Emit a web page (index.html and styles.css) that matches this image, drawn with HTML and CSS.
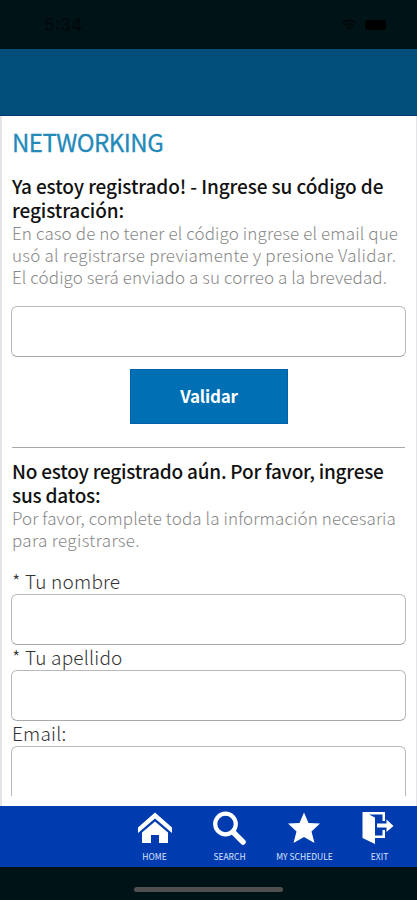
FILE: index.html
```html
<!DOCTYPE html>
<html lang="es">
<head>
<meta charset="utf-8">
<title>Networking</title>
<link rel="stylesheet" href="styles.css">
</head>
<body>
<div class="status">
  <span class="time">5:34</span>
  <svg class="wifi" width="16" height="12" viewBox="0 0 16 12"><g fill="none" stroke="#00080a" stroke-width="1.9"><path d="M1 4.2Q8-1.8 15 4.2M3.500 7Q8 3 12.500 7"/></g><path d="M5.500 8.800Q8 6.800 10.500 8.800L8 11.500Z" fill="#00080a"/></svg>
  <span class="battery"></span>
</div>
<header class="header"></header>
<main class="content">
  <h1 class="title">NETWORKING</h1>
  <h2 class="heading"><span class="h-a">Ya estoy registrado! - Ingrese su código de</span><br><span class="h-b">registración:</span></h2>
  <p class="note"><span class="n-a">En caso de no tener el código ingrese el email que</span><br><span class="n-b">usó al registrarse previamente y presione Validar.</span><br><span class="n-c">El código será enviado a su correo a la brevedad.</span></p>
  <div class="field code"></div>
  <button class="validate">Validar</button>
  <hr class="rule">
  <h2 class="heading"><span class="h-c">No estoy registrado aún. Por favor, ingrese</span><br><span class="h-d">sus datos:</span></h2>
  <p class="note"><span class="n-d">Por favor, complete toda la información necesaria</span><br><span class="n-e">para registrarse.</span></p>
  <div class="form">
    <label class="label">* Tu nombre</label>
    <div class="field"></div>
    <label class="label">* Tu apellido</label>
    <div class="field"></div>
    <label class="label">Email:</label>
    <div class="field cut"></div>
  </div>
</main>
<nav class="nav">
  <a class="item"><svg width="34" height="32" viewBox="0 0 34 32"><path d="M0 16.500 17 1.500 34 16.500V22L17 7.500 0 22Z"/><path d="M4 21.500 17 10.500 30 21.500V32H21V24H13V32H4Z"/></svg><span>HOME</span></a>
  <a class="item"><svg width="34" height="32" viewBox="0 0 34 32"><circle cx="12.500" cy="13" r="10.300" fill="none" stroke="#fff" stroke-width="4.200"/><path d="M20 21 30 31" stroke="#fff" stroke-width="5.500" stroke-linecap="round"/></svg><span>SEARCH</span></a>
  <a class="item"><svg width="34" height="32" viewBox="0 0 34 32"><path d="M16 1.500 20.500 12 32 12.500 23.500 20.500 26.500 32 16 26 5.500 32 8.500 20.500 0 12.500 11.500 12Z"/></svg><span>MY SCHEDULE</span></a>
  <a class="item"><svg width="34" height="32" viewBox="0 0 34 32"><path d="M-.5 1H22V10H19.500V3.500H6L12 6.500V24.500H19.500V19H22V27H12V33L-.5 27Z"/><path d="M14 12.500H23.500V8.500L30.500 15 23.500 21V16.500H14Z"/></svg><span>EXIT</span></a>
</nav>
<footer class="bottom"><span class="handle"></span></footer>
</body>
</html>
```
FILE: styles.css
```css
* { box-sizing: border-box; }
body {
  margin: 0;
  width: 417px;
  height: 900px;
  overflow: hidden;
  display: flex;
  flex-direction: column;
  background: #fff;
  font-family: "Noto Sans CJK SC", "Noto Sans", sans-serif;
}
h1, h2, p { margin: 0; white-space: nowrap; }
.status {
  height: 49px;
  flex: none;
  display: flex;
  align-items: center;
  background: #001418;
  padding: 0 31px 0 44px;
}
.time { flex: 1; font: 600 17px/20px Inter, sans-serif; color: #00090b; }
.wifi { margin-right: 8px; }
.battery { width: 21px; height: 10px; border-radius: 3px; background: #000; }
.header { height: 67px; flex: none; background: #004e79; border-bottom: 1px solid #003b70; }
.content {
  height: 690px;
  flex: none;
  padding: 11px 10px 0 9px;
  border: solid #e4e4e8;
  border-width: 0 1px 0 2px;
  overflow: hidden;
}
.title { padding-left: 1px; font-weight: 400; font-size: 24px; line-height: 30px; letter-spacing: -.5px; color: #2389b9; -webkit-text-stroke: .3px; }
.heading { padding-left: 1px; font-size: 19px; line-height: 24px; font-weight: 500; color: #111; }
.title + .heading { margin-top: 17px; }
.h-a { letter-spacing: -.1px; }
.h-b { letter-spacing: -.1px; }
.h-c { letter-spacing: -.23px; }
.h-d { letter-spacing: -.2px; }
.note { padding-left: 1px; font-size: 17px; line-height: 22px; font-weight: 300; color: #888; }
.n-a { letter-spacing: .13px; }
.n-b { letter-spacing: .24px; }
.n-c { letter-spacing: .1px; }
.n-d { letter-spacing: .11px; }
.n-e { letter-spacing: .35px; }
.field { height: 51px; border: 1px solid #b9b9b9; border-bottom-color: #aaa; border-radius: 6px; background: #fff; }
.code { margin-top: 18px; }
.validate {
  display: block;
  width: 158px;
  height: 55px;
  margin: 12px auto 0 119px;
  padding: 0;
  border: 1px solid #0061a8;
  background: #006fb3;
  color: #fff;
  font: 700 17px/49px "Noto Sans CJK SC", sans-serif;
  letter-spacing: -.2px;
}
.validate { padding-bottom: 3px; }
.rule { height: 1px; margin: 23px 1px 11px; border: 0; background: #aaa; }
.form { margin-top: 18px; }
.label { display: block; height: 25px; padding-left: 1px; font-size: 19px; line-height: 24px; font-weight: 300; letter-spacing: .2px; color: #333; }
.cut { height: 50px; border-bottom: 0; border-radius: 6px 6px 0 0; }
.nav {
  height: 61px;
  flex: none;
  display: grid;
  grid-template-columns: repeat(4, 75px);
  padding-left: 117px;
  background: #003baf;
}
.item { display: flex; flex-direction: column; align-items: center; padding-top: 5px; }
.item svg { fill: #fff; overflow: visible; }
.item span { margin-top: 8px; font-size: 8.500px; line-height: 11px; color: #dce4ff; white-space: nowrap; }
.bottom { height: 33px; display: flex; justify-content: center; padding-top: 20px; background: #001418; }
.handle { width: 149px; height: 5px; border-radius: 3px; background: #505050; }
```
